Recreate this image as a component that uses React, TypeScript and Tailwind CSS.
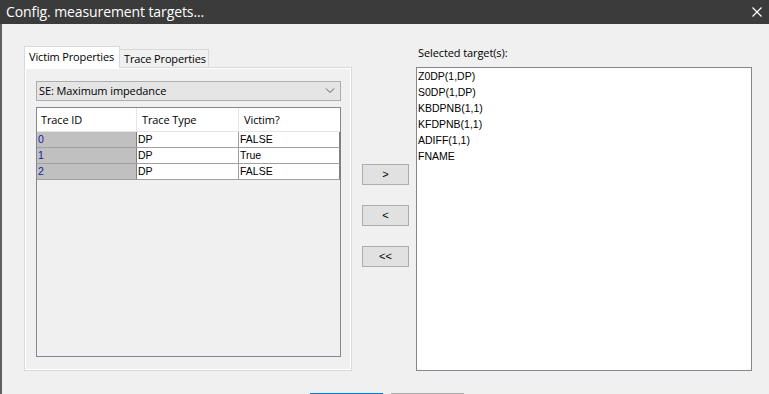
import React from "react";

const ui = { fontFamily: '"Open Sans", "Noto Sans", sans-serif' };
const ms = { fontFamily: '"Liberation Sans", Arial, sans-serif' };

const rows = [
  { id: "0", type: "DP", victim: "FALSE" },
  { id: "1", type: "DP", victim: "True" },
  { id: "2", type: "DP", victim: "FALSE" },
];

const targets = ["Z0DP(1,DP)", "S0DP(1,DP)", "KBDPNB(1,1)", "KFDPNB(1,1)", "ADIFF(1,1)", "FNAME"];

export default function App() {
  return (
    <div className="w-[769px] h-[394px] overflow-hidden bg-[#f0f0f0] flex flex-col" style={ui}>
      {/* Title bar */}
      <div className="h-[24px] shrink-0 bg-[#3b3b3b] flex items-center justify-between pl-[6px] pr-[7px]">
        <span className="text-white text-[14px] leading-[24px] tracking-[-0.1px] whitespace-nowrap">Config. measurement targets...</span>
        <svg width="10" height="10" viewBox="0 0 10 10" className="mt-[-1px]">
          <path d="M0.5 0.5 L9.5 9.5 M9.5 0.5 L0.5 9.5" stroke="#ffffff" strokeWidth="1.2" />
        </svg>
      </div>

      {/* Body */}
      <div className="flex-1 flex flex-col border-l-2 border-[#5e5e5e]">
        <div className="h-[347px] shrink-0 flex pl-[22px]">
          {/* Left: tab control */}
          <div className="w-[328px] pt-[22px] flex flex-col">
            <div className="h-[21px] flex items-end">
              <div className="relative z-10 mb-[-1px] h-[22px] w-[96px] bg-white border-t border-l border-r border-[#d9d9d9] text-[11px] tracking-[-0.15px] whitespace-nowrap text-black pl-[4px] leading-[20px]">
                Victim Properties
              </div>
              <div className="h-[18px] w-[89px] bg-[#f0f0f0] border-t border-r border-[#d9d9d9] text-[11px] tracking-[-0.15px] whitespace-nowrap text-black pl-[4px] leading-[18px]">
                Trace Properties
              </div>
            </div>
            <div className="h-[304px] border border-[#d9d9d9] shadow-[inset_0_0_0_1px_#ffffff] pt-[13px] pl-[11px]">
              {/* Dropdown */}
              <div className="w-[305px] h-[20px] bg-[#e5e5e5] border border-[#adadad] flex items-center justify-between pl-[2px] pr-[5px]">
                <span className="text-[11px] tracking-[-0.1px] whitespace-nowrap text-black leading-[18px]">SE: Maximum impedance</span>
                <svg width="10" height="6" viewBox="0 0 10 6">
                  <path d="M1 0.5 L5 4.5 L9 0.5" stroke="#5a5a5a" strokeWidth="1" fill="none" />
                </svg>
              </div>
              {/* Grid */}
              <div className="mt-[6px] w-[305px] h-[250px] border border-[#828790] bg-[#f0f0f0] flex flex-col">
                <div className="h-[24px] flex bg-white text-[11px] tracking-[-0.1px] whitespace-nowrap text-black border-b border-[#e5e5e5]">
                  <div className="w-[100px] border-r border-[#e5e5e5] pl-[4px] leading-[24px]">Trace ID</div>
                  <div className="w-[102px] border-r border-[#e5e5e5] pl-[5px] leading-[24px]">Trace Type</div>
                  <div className="w-[101px] pl-[5px] leading-[24px]">Victim?</div>
                </div>
                {rows.map((r) => (
                  <div key={r.id} className="h-[16px] flex text-[10.5px] border-b border-[#a0a0a0] w-[304px] border-r-2 border-r-[#808080]" style={ms}>
                    <div className="w-[100px] bg-[#c0c0c0] text-[#1a1aa6] border-r border-[#808080] pl-[1px] leading-[15px]">{r.id}</div>
                    <div className="w-[102px] bg-white text-black border-r border-[#a0a0a0] pl-[1px] leading-[15px]">{r.type}</div>
                    <div className="flex-1 bg-white text-black pl-[1px] leading-[15px]">{r.victim}</div>
                  </div>
                ))}
              </div>
            </div>
          </div>

          {/* Middle: buttons */}
          <div className="ml-[10px] w-[47px] pt-[140px] flex flex-col gap-[20px]">
            {[">", "<", "<<"].map((b) => (
              <div key={b} className="h-[21px] w-[47px] bg-[#e1e1e1] border border-[#adadad] flex items-center justify-center text-[11px] text-black" style={ms}>
                {b}
              </div>
            ))}
          </div>

          {/* Right: list */}
          <div className="ml-[7px] w-[336px] flex flex-col">
            <div className="pt-[21px] h-[37px] pl-[2px] text-[11px] tracking-[-0.1px] whitespace-nowrap text-black leading-[16px]">Selected target(s):</div>
            <div className="mt-[6px] h-[304px] border border-[#828790] bg-white pl-[1px]" style={ms}>
              {targets.map((t) => (
                <div key={t} className="h-[16px] leading-[16px] text-[10.5px] text-black">{t}</div>
              ))}
            </div>
          </div>
        </div>

        {/* Footer buttons (clipped) */}
        <div className="pt-[22px] pl-[308px] flex gap-[8px]">
          <div className="w-[73px] h-[23px] border-2 border-[#0078d7] bg-[#e1e1e1]" />
          <div className="w-[73px] h-[23px] border border-[#adadad] bg-[#e1e1e1]" />
        </div>
      </div>
    </div>
  );
}
